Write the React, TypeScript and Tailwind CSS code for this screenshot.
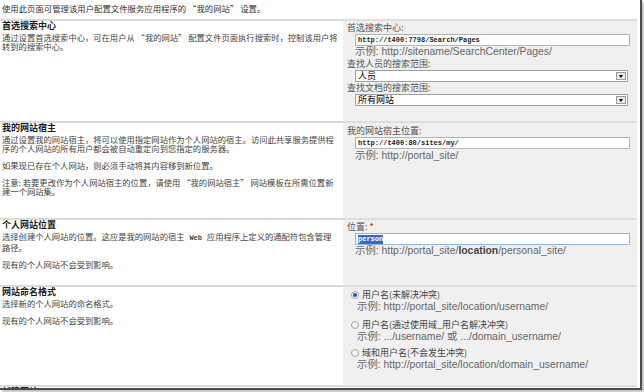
import React from 'react';

const cjk = "font-['Noto_Sans_CJK_SC',sans-serif]";
const latin = "font-['Liberation_Sans','Noto_Sans_CJK_SC',sans-serif]";
const mono = "font-['Liberation_Mono',monospace]";

const Heading: React.FC<{ children: React.ReactNode }> = ({ children }) => (
  <div className={`${cjk} text-[9px] leading-[10px] font-bold text-[#1a1a1a]`}>{children}</div>
);

const Para: React.FC<{ children: React.ReactNode; first?: boolean }> = ({ children, first }) => (
  <p className={`${cjk} text-[8.3px] leading-[9px] text-[#444] ${first ? 'mt-[2px]' : 'mt-[8px]'}`}>{children}</p>
);

const Label: React.FC<{ children: React.ReactNode }> = ({ children }) => (
  <div className={`${cjk} text-[9px] leading-[12px] text-[#555]`}>{children}</div>
);

const Example: React.FC<{ children: React.ReactNode; className?: string }> = ({ children, className }) => (
  <div className={`${latin} text-[10.4px] leading-[12px] text-[#666] ${className ?? ''}`}>{children}</div>
);

const TextBox: React.FC<{ value: string; selected?: boolean }> = ({ value, selected }) => (
  <div
    className={`ml-[8px] w-[275px] h-[12px] bg-white border flex items-center px-[2px] ${
      selected ? 'border-[#8fb6e0]' : 'border-[#b4b4b4]'
    }`}
  >
    <span
      className={`${mono} text-[7px] leading-[9px] font-bold ${
        selected ? 'bg-[#3169c6] text-white' : 'text-[#222]'
      }`}
    >
      {value}
    </span>
  </div>
);

const Select: React.FC<{ value: string }> = ({ value }) => (
  <div className="ml-[8px] w-[273px] h-[12px] bg-white border border-[#a0a0a0] flex items-center justify-between pl-[2px] pr-[1px]">
    <span className={`${cjk} text-[9px] leading-[10px] text-black`}>{value}</span>
    <span className="w-[10px] h-[8px] bg-[#ececec] border border-[#9a9a9a] flex items-center justify-center">
      <span className="w-0 h-0 border-l-[2.5px] border-r-[2.5px] border-t-[3px] border-l-transparent border-r-transparent border-t-black" />
    </span>
  </div>
);

const Radio: React.FC<{ checked?: boolean; label: string }> = ({ checked, label }) => (
  <div className="flex items-center gap-[3px] ml-[4px] h-[12px]">
    <span className="w-[8px] h-[8px] rounded-full border border-[#a6a6a6] bg-[#f6f6f6] flex items-center justify-center">
      {checked && <span className="w-[4px] h-[4px] rounded-full bg-[#1b5fa8]" />}
    </span>
    <span className={`${cjk} text-[9px] leading-[12px] text-[#444]`}>{label}</span>
  </div>
);

const Row: React.FC<{ h: string; left: React.ReactNode; right: React.ReactNode }> = ({ h, left, right }) => (
  <div className={`grid grid-cols-[343px_294px] ${h} shrink-0`}>
    <div className="border-t-2 border-[#dadada] pl-[2px] pr-[4px]">{left}</div>
    <div className="border-t-2 border-[#dedede] bg-[#f0f0f0] pl-[4px]">{right}</div>
  </div>
);

export default function App() {
  return (
    <div className="w-[644px] h-[392px] bg-white overflow-hidden">
      <div className="w-[642px] h-[390px] border-r-2 border-b-2 border-[#4d4d4d] shadow-[2px_2px_2px_#bdbdbd] overflow-hidden flex flex-col">
        <div className={`${cjk} h-[19px] shrink-0 pl-[2px] pt-[3px] text-[8.4px] leading-[10px] text-[#333]`}>
          使用此页面可管理该用户配置文件服务应用程序的 “我的网站” 设置。
        </div>

        <Row
          h="h-[102px]"
          left={
            <>
              <Heading>首选搜索中心</Heading>
              <Para first>
                通过设置首选搜索中心，可在用户从 “我的网站” 配置文件页面执行搜索时，控制该用户将转到的搜索中心。
              </Para>
            </>
          }
          right={
            <div className="pt-[1px]">
              <Label>首选搜索中心:</Label>
              <TextBox value="http://t400:7798/Search/Pages" />
              <Example className="ml-[8px]">示例: http://sitename/SearchCenter/Pages/</Example>
              <Label>查找人员的搜索范围:</Label>
              <Select value="人员" />
              <Label>查找文档的搜索范围:</Label>
              <Select value="所有网站" />
            </div>
          }
        />

        <Row
          h="h-[97px]"
          left={
            <>
              <Heading>我的网站宿主</Heading>
              <Para first>
                通过设置我的网站宿主，将可以使用指定网站作为个人网站的宿主。访问此共享服务提供程序的个人网站的所有用户都会被自动重定向到您指定的服务器。
              </Para>
              <Para>如果现已存在个人网站，则必须手动将其内容移到新位置。</Para>
              <Para>注意: 若要更改作为个人网站宿主的位置，请使用 “我的网站宿主” 网站模板在所需位置新建一个网站集。</Para>
            </>
          }
          right={
            <div className="pt-[2px]">
              <Label>我的网站宿主位置:</Label>
              <TextBox value="http://t400:80/sites/my/" />
              <Example className="ml-[8px] leading-[14px]">示例: http://portal_site/</Example>
            </div>
          }
        />

        <Row
          h="h-[67px]"
          left={
            <>
              <Heading>个人网站位置</Heading>
              <Para first>
                选择创建个人网站的位置。这应是我的网站的宿主 <span className={`${mono} text-[7px] leading-[9px] font-bold px-[3px]`}>Web</span> 应用程序上定义的通配符包含管理路径。
              </Para>
              <Para>现有的个人网站不会受到影响。</Para>
            </>
          }
          right={
            <div className="pt-[1px]">
              <Label>
                位置: <span className="text-[#e00000]">*</span>
              </Label>
              <TextBox value="person" selected />
              <Example className="ml-[8px]">
                示例: http://portal_site/<b className="text-[#444]">location</b>/personal_site/
              </Example>
            </div>
          }
        />

        <Row
          h="h-[100px]"
          left={
            <>
              <Heading>网站命名格式</Heading>
              <Para first>选择新的个人网站的命名格式。</Para>
              <Para>现有的个人网站不会受到影响。</Para>
            </>
          }
          right={
            <div className="pt-[2px]">
              <Radio checked label="用户名(未解决冲突)" />
              <Example className="ml-[10px]">示例: http://portal_site/location/username/</Example>
              <div className="mt-[6px]">
                <Radio label="用户名(通过使用域_用户名解决冲突)" />
              </div>
              <Example className="ml-[10px]">示例: .../username/ 或 .../domain_username/</Example>
              <div className="mt-[4px]">
                <Radio label="域和用户名(不会发生冲突)" />
              </div>
              <Example className="ml-[10px]">示例: http://portal_site/location/domain_username/</Example>
            </div>
          }
        />

        <Row
          h="h-[20px]"
          left={<Heading>新建网站</Heading>}
          right={<div />}
        />
      </div>
    </div>
  );
}
